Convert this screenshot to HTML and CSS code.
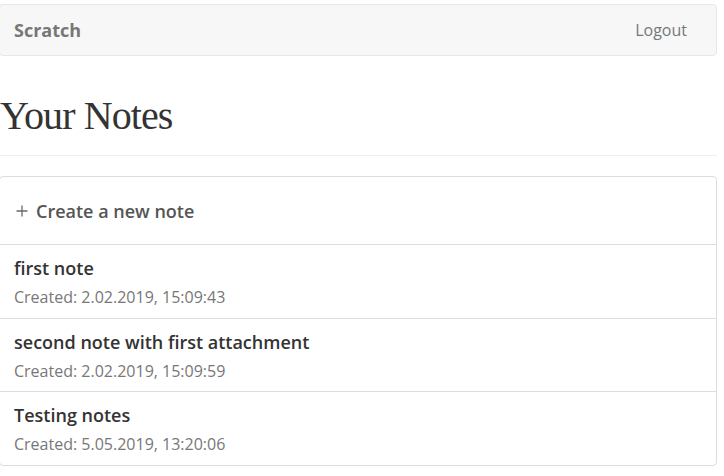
FILE: index.html
```html
<!DOCTYPE html>
<html lang="en">
<head>
<meta charset="utf-8">
<title>Scratch</title>
<link rel="stylesheet" href="styles.css">
</head>
<body>
<div class="app">
  <nav class="navbar">
    <a class="brand" href="#">Scratch</a>
    <a class="nav-link" href="#">Logout</a>
  </nav>
  <div class="page-header">
    <h1>Your Notes</h1>
  </div>
  <div class="list-group">
    <a class="list-item create" href="#">
      <svg class="plus" width="12" height="12" viewBox="0 0 12 12" aria-hidden="true">
        <path d="M6 0.5V11.5M0.5 6H11.5" stroke="#6a6a6a" stroke-width="1.3" fill="none"/>
      </svg>
      <span class="create-label">Create a new note</span>
    </a>
    <a class="list-item note" href="#">
      <h4 class="note-title">first note</h4>
      <p class="note-date">Created: 2.02.2019, 15:09:43</p>
    </a>
    <a class="list-item note" href="#">
      <h4 class="note-title">second note with first attachment</h4>
      <p class="note-date">Created: 2.02.2019, 15:09:59</p>
    </a>
    <a class="list-item note" href="#">
      <h4 class="note-title">Testing notes</h4>
      <p class="note-date">Created: 5.05.2019, 13:20:06</p>
    </a>
  </div>
</div>
</body>
</html>
```
FILE: styles.css
```css
html, body {
  margin: 0;
  padding: 0;
  background: #fff;
}

body {
  font-family: "Open Sans", "Liberation Sans", sans-serif;
  color: #333;
}

a {
  text-decoration: none;
}

.app {
  width: 718px;
  margin-left: -1px;
  padding-top: 4px;
}

.navbar {
  box-sizing: border-box;
  height: 52px;
  display: flex;
  align-items: center;
  justify-content: space-between;
  padding: 0 29px 0 14px;
  background: #f7f7f7;
  border: 1px solid #e7e7e7;
  border-radius: 4px;
}

.brand {
  font-size: 18px;
  font-weight: 700;
  color: #777;
  line-height: 24px;
}

.nav-link {
  font-size: 16px;
  font-weight: 400;
  color: #777;
  line-height: 22px;
}

.page-header {
  margin-top: 38px;
  padding-bottom: 17px;
  border-bottom: 1px solid #eee;
}

.page-header h1 {
  margin: 0;
  padding-left: 1px;
  font-family: "Liberation Serif", "DejaVu Serif", serif;
  font-weight: 400;
  font-size: 40px;
  line-height: 44px;
  letter-spacing: -0.9px;
  color: #333;
}

.list-group {
  margin-top: 20px;
  border: 1px solid #ddd;
  border-radius: 4px;
}

.list-item {
  display: block;
  padding: 11px 14px 9.7px 14px;
  border-top: 1px solid #ddd;
}

.list-item:first-child {
  border-top: 0;
}

.create {
  display: flex;
  align-items: center;
  gap: 8px;
  padding: 22px 14px 21px 16px;
}

.plus {
  display: block;
  flex: none;
}

.create-label {
  font-size: 18px;
  font-weight: 600;
  line-height: 24px;
  color: #555;
}

.note-title {
  margin: 0 0 6px 0;
  font-size: 18px;
  font-weight: 600;
  line-height: 24px;
  color: #333;
}

.note-date {
  margin: 0;
  font-size: 16px;
  line-height: 22px;
  color: #777;
}
```
